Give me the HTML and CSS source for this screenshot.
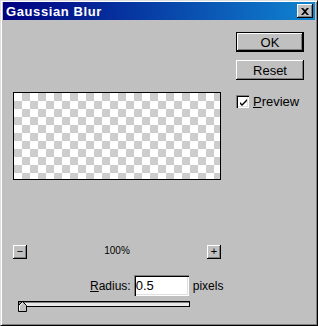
FILE: index.html
```html
<!DOCTYPE html>
<html lang="en">
<head>
    <meta charset="UTF-8">
    <title>Gaussian Blur</title>
    <link rel="stylesheet" href="styles.css">
</head>
<body>
    <div class="window">
        <div class="titlebar">
            <span class="title">Gaussian Blur</span>
            <button class="close-btn" type="button">
                <svg width="8" height="7" viewBox="0 0 8 7"><path d="M0 0h2l2 2 2-2h2L5 3.5 8 7H6L4 5 2 7H0l3-3.5z" fill="#000"/></svg>
            </button>
        </div>
        <div class="dialog">
            <div class="left-col">
                <div class="preview"></div>
                <div class="zoom-row">
                    <button class="zoom-btn" type="button">&minus;</button>
                    <span class="zoom-level">100%</span>
                    <button class="zoom-btn" type="button">+</button>
                </div>
                <div class="radius-row">
                    <label for="radius"><u>R</u>adius:</label>
                    <input type="text" id="radius" value="0.5">
                    <span class="unit">pixels</span>
                </div>
                <div class="slider">
                    <div class="track"></div>
                    <svg class="thumb" width="9" height="11" viewBox="0 0 9 11">
                        <path d="M0.5 10.5V4.5L4.5 0.5L8.5 4.5V10.5Z" fill="#c0c0c0" stroke="#000"/>
                        <path d="M1.5 9.5V4.9L4.5 1.9" fill="none" stroke="#fff"/>
                    </svg>
                </div>
            </div>
            <div class="right-col">
                <button class="btn default" type="button">OK</button>
                <button class="btn" type="button">Reset</button>
                <label class="check">
                    <span class="box">
                        <svg width="9" height="9" viewBox="0 0 9 9"><path d="M1 4l2 2 5-5v2L3 8 1 6z" fill="#000"/></svg>
                    </span>
                    <span><u>P</u>review</span>
                </label>
            </div>
        </div>
    </div>
</body>
</html>
```

FILE: styles.css
```css
html, body {
    margin: 0;
    padding: 0;
}
body {
    font-family: "Liberation Sans", Arial, sans-serif;
    font-size: 12px;
    color: #000;
    background: #c0c0c0;
}
.window {
    width: 318px;
    height: 326px;
    box-sizing: border-box;
    background: #c0c0c0;
    border-top: 1px solid #dfdfdf;
    border-left: 1px solid #dfdfdf;
    border-right: 1px solid #000;
    border-bottom: 1px solid #000;
    box-shadow: inset 1px 1px 0 #fff, inset -1px -1px 0 #808080;
    padding: 1px 2px 2px 2px;
}
.titlebar {
    height: 18px;
    display: flex;
    align-items: center;
    justify-content: space-between;
    padding: 0 2px 0 3px;
    background: linear-gradient(to right, #000080, #1084d0);
}
.title {
    color: #fff;
    font-weight: bold;
    font-size: 13px;
    letter-spacing: 0.6px;
}
.close-btn {
    width: 16px;
    height: 14px;
    padding: 0;
    display: flex;
    align-items: center;
    justify-content: center;
    background: #c0c0c0;
    border: none;
    box-shadow: inset -1px -1px 0 #000, inset 1px 1px 0 #fff, inset -2px -2px 0 #808080;
}
.dialog {
    display: flex;
    padding: 12px 0 0 10px;
}
.left-col {
    width: 208px;
    padding-top: 60px;
}
.preview {
    width: 208px;
    height: 88px;
    box-sizing: border-box;
    border: 1px solid #000;
    background-color: #fff;
    background-image:
        linear-gradient(45deg, #cdcdcd 25%, transparent 25%, transparent 75%, #cdcdcd 75%),
        linear-gradient(45deg, #cdcdcd 25%, transparent 25%, transparent 75%, #cdcdcd 75%);
    background-size: 16px 16px;
    background-position: 0 0, 8px 8px;
}
.zoom-row {
    display: flex;
    align-items: center;
    margin-top: 65px;
    height: 14px;
}
.zoom-btn {
    width: 14px;
    height: 14px;
    padding: 0 0 1px 0;
    font-family: "Liberation Sans", Arial, sans-serif;
    font-size: 11px;
    line-height: 11px;
    background: #c0c0c0;
    border: none;
    box-shadow: inset -1px -1px 0 #000, inset 1px 1px 0 #fff, inset -2px -2px 0 #808080;
}
.zoom-level {
    flex: 1;
    text-align: center;
    font-size: 10px;
    margin-top: -4px;
}
.radius-row {
    display: flex;
    align-items: center;
    margin-top: 16px;
    padding-left: 77px;
}
.radius-row label {
    margin-right: 3px;
}
.radius-row input {
    width: 55px;
    height: 21px;
    box-sizing: border-box;
    padding: 0 2px;
    font-family: "Liberation Sans", Arial, sans-serif;
    font-size: 13px;
    border: none;
    background: #fff;
    box-shadow: inset 1px 1px 0 #808080, inset 2px 2px 0 #000, inset -1px -1px 0 #fff, inset -2px -2px 0 #dfdfdf;
    outline: none;
}
.unit {
    margin-left: 4px;
}
.slider {
    position: relative;
    margin: 5px 0 0 5px;
    width: 172px;
    height: 12px;
}
.track {
    height: 6px;
    box-sizing: border-box;
    border: 1px solid #000;
    background: #e8e8e8;
    box-shadow: inset 1px 1px 0 #808080;
}
.thumb {
    position: absolute;
    left: 0;
    top: 0;
}
.right-col {
    display: flex;
    flex-direction: column;
    margin-left: 15px;
    width: 68px;
}
.btn {
    width: 68px;
    height: 20px;
    padding: 0;
    font-family: "Liberation Sans", Arial, sans-serif;
    font-size: 13px;
    background: #c0c0c0;
    border: none;
    box-shadow: inset -1px -1px 0 #000, inset 1px 1px 0 #fff, inset -2px -2px 0 #808080;
    margin-bottom: 8px;
}
.btn.default {
    border: 1px solid #000;
}
.check {
    display: flex;
    align-items: center;
    margin-top: 6px;
    font-size: 13px;
}
.box {
    width: 13px;
    height: 13px;
    box-sizing: border-box;
    display: flex;
    align-items: center;
    justify-content: center;
    background: #fff;
    box-shadow: inset 1px 1px 0 #808080, inset 2px 2px 0 #000, inset -1px -1px 0 #fff, inset -2px -2px 0 #dfdfdf;
    margin-right: 4px;
}
.box svg {
    margin: 1px 0 0 1px;
}
```
